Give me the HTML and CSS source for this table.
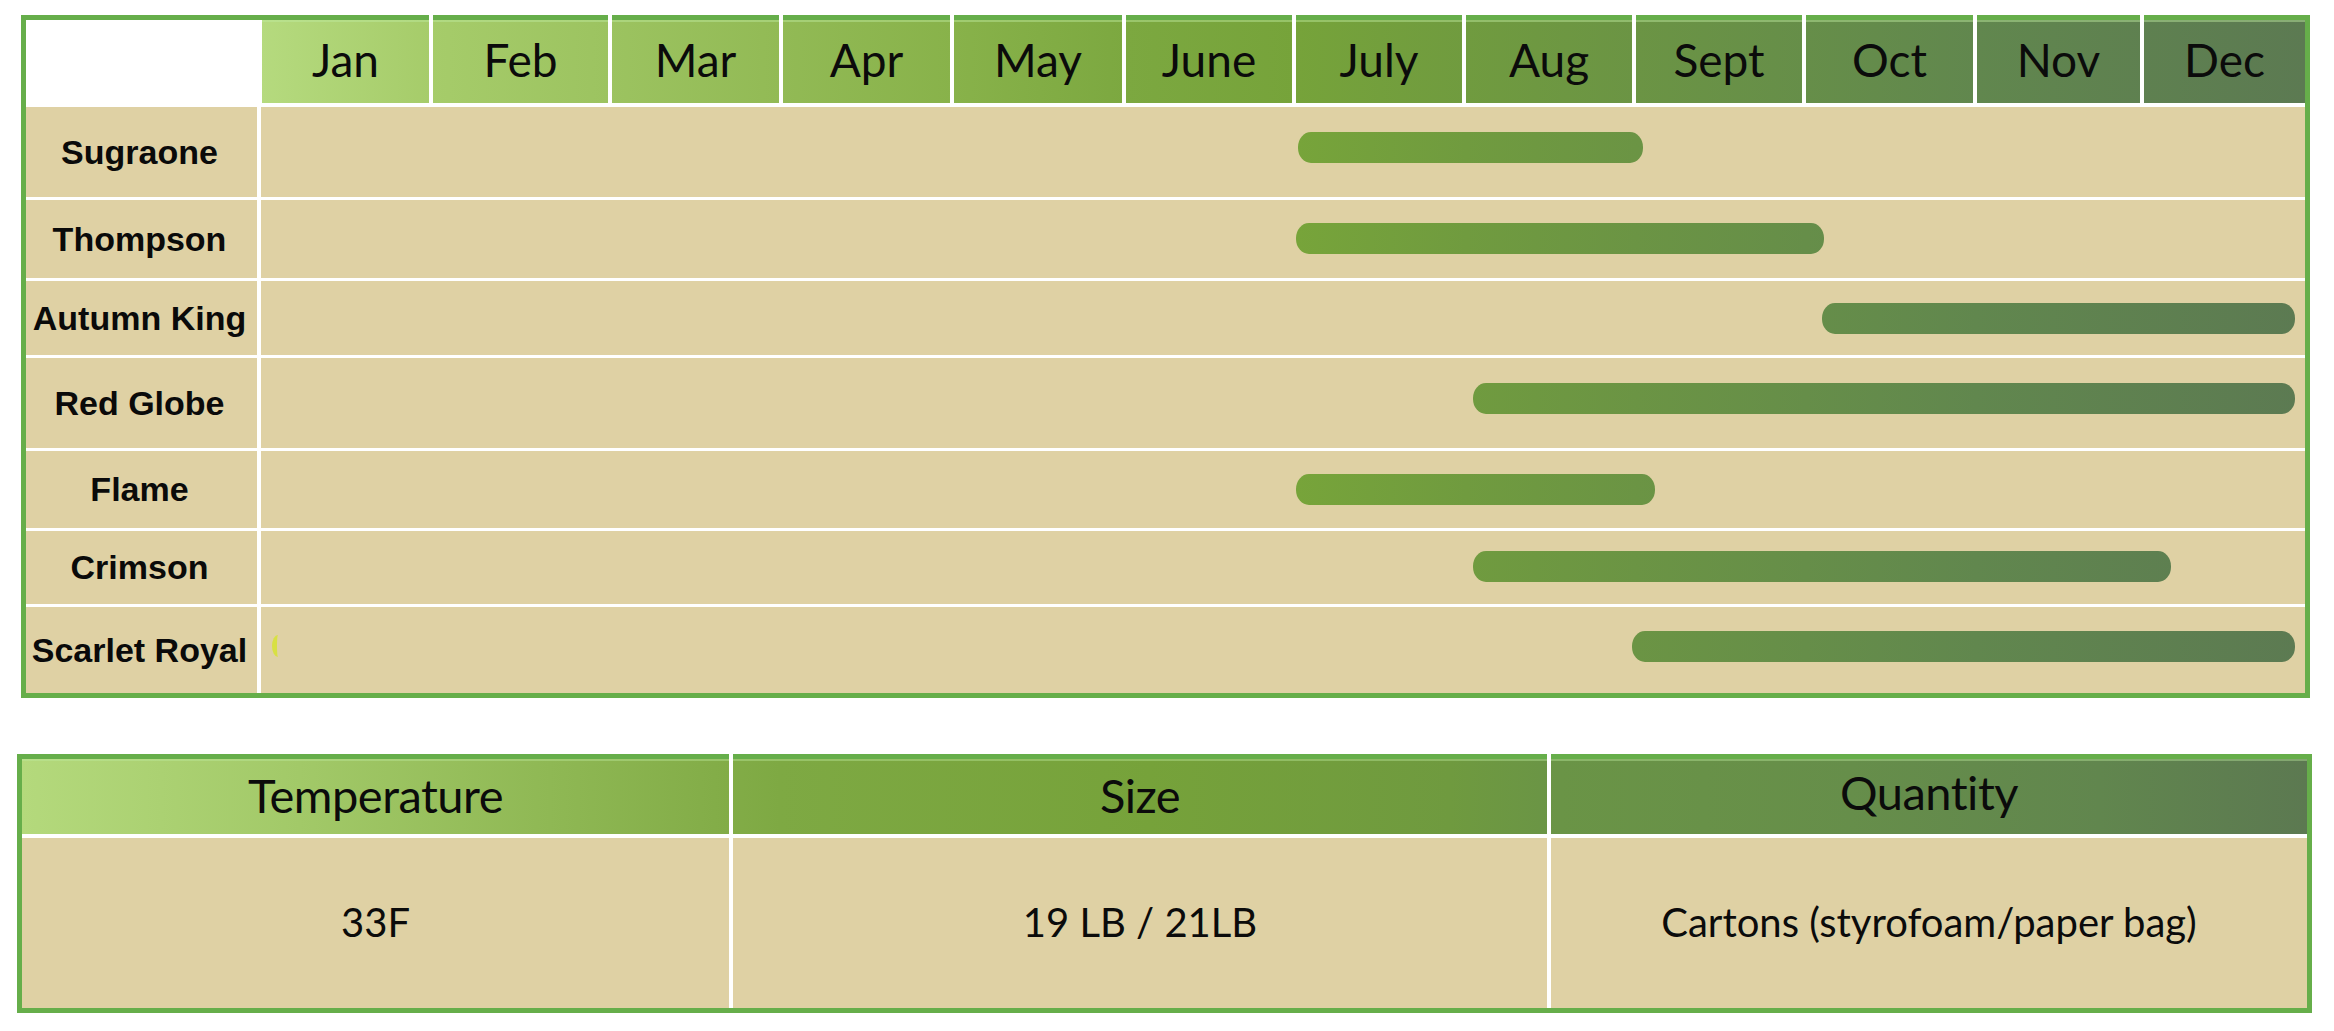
FILE: index.html
```html
<!DOCTYPE html>
<html lang="en">
<head>
<meta charset="utf-8">
<title>Grape Season Schedule</title>
<link rel="stylesheet" href="styles.css">
</head>
<body>
<main class="page">
  <section class="schedule">
    <div class="head">
      <div class="corner"></div>
      <div class="months">
        <div class="month">Jan</div>
        <div class="month">Feb</div>
        <div class="month">Mar</div>
        <div class="month">Apr</div>
        <div class="month">May</div>
        <div class="month">June</div>
        <div class="month">July</div>
        <div class="month">Aug</div>
        <div class="month">Sept</div>
        <div class="month">Oct</div>
        <div class="month">Nov</div>
        <div class="month">Dec</div>
      </div>
    </div>
    <div class="row row-sugraone">
      <div class="label">Sugraone</div>
      <div class="track"><span class="bar" style="margin-left:1037px;width:345px"></span></div>
    </div>
    <div class="row row-thompson">
      <div class="label">Thompson</div>
      <div class="track"><span class="bar" style="margin-left:1035px;width:528px"></span></div>
    </div>
    <div class="row row-autumn">
      <div class="label">Autumn King</div>
      <div class="track"><span class="bar" style="margin-left:1561px;width:473px"></span></div>
    </div>
    <div class="row row-redglobe">
      <div class="label">Red Globe</div>
      <div class="track"><span class="bar" style="margin-left:1212px;width:822px"></span></div>
    </div>
    <div class="row row-flame">
      <div class="label">Flame</div>
      <div class="track"><span class="bar" style="margin-left:1035px;width:359px"></span></div>
    </div>
    <div class="row row-crimson">
      <div class="label">Crimson</div>
      <div class="track"><span class="bar" style="margin-left:1212px;width:698px"></span></div>
    </div>
    <div class="row row-scarlet">
      <div class="label">Scarlet Royal</div>
      <div class="track"><span class="tick"></span><span class="bar" style="margin-left:1371px;width:663px"></span></div>
    </div>
  </section>

  <section class="specs">
    <div class="spec-head">Temperature</div>
    <div class="spec-head">Size</div>
    <div class="spec-head spec-head-q">Quantity</div>
    <div class="spec-val">33F</div>
    <div class="spec-val">19 LB / 21LB</div>
    <div class="spec-val">Cartons (styrofoam/paper bag)</div>
  </section>
</main>
</body>
</html>
```

FILE: styles.css
```css
html, body {
  margin: 0;
  padding: 0;
  background: #ffffff;
}

body {
  font-family: Lato, "Open Sans", "Liberation Sans", sans-serif;
  font-variant-ligatures: none;
  font-feature-settings: "liga" 0, "clig" 0;
  color: #0b0b0b;
}

.page {
  padding-top: 15px;
}

/* ---------- schedule table ---------- */
.schedule {
  margin-left: 21px;
  width: 2289px;
  box-sizing: border-box;
  border: 5px solid #66ae4a;
  border-top: 0;
  background: #ffffff;
  display: flex;
  flex-direction: column;
}

.head {
  display: flex;
  height: 88px;
}

.corner {
  width: 236px;
  flex: none;
  background: #ffffff;
  border-top: 5px solid #66ae4a;
}

.months {
  flex: 1;
  display: grid;
  grid-template-columns: 167px 175px 167px 167px 168px 166px 166px 166px 166px 167px 163px 161px;
  column-gap: 4px;
}

.month {
  border-top: 5px solid #66ae4a;
  box-shadow: inset 0 2px 0 rgba(190, 235, 160, 0.45);
  background-image: linear-gradient(to right,
    #b5da7e 262px, #a6cc6a 430px, #9cc360 610px, #92ba55 780px,
    #88b24a 954px, #7ca840 1126px, #76a33a 1296px, #709b3f 1466px,
    #6b9444 1636px, #668e49 1806px, #61874e 1977px, #5c7a52 2305px);
  background-attachment: fixed;
  display: flex;
  align-items: center;
  justify-content: center;
  font-size: 46px;
  padding-bottom: 4px;
  box-sizing: border-box;
}

.row {
  display: flex;
  gap: 4px;
  margin-top: 3px;
}

.row-sugraone { margin-top: 4px; height: 90px; }
.row-thompson { height: 78px; }
.row-autumn { height: 74px; }
.row-redglobe { height: 90px; }
.row-flame { height: 77px; }
.row-crimson { height: 73px; }
.row-scarlet { height: 86px; }

.label {
  width: 231px;
  flex: none;
  background: #dfd1a4;
  display: flex;
  align-items: center;
  justify-content: center;
  font-family: "Liberation Sans", Arial, sans-serif;
  font-weight: bold;
  font-size: 34px;
  color: #0a0a0a;
  padding-right: 4px;
  box-sizing: border-box;
  white-space: nowrap;
}

.track {
  flex: 1;
  position: relative;
  background: #dfd1a4;
  display: flex;
  align-items: flex-start;
}

.bar {
  display: block;
  flex: none;
  height: 31px;
  margin-top: 23px;
  border-radius: 13px / 15px;
  background-image: linear-gradient(to right,
    #b5da7e 262px, #a6cc6a 430px, #9cc360 610px, #92ba55 780px,
    #88b24a 954px, #7ca840 1126px, #77a43a 1296px, #709b3f 1466px,
    #6b9444 1636px, #668e49 1806px, #61874e 1977px, #5c7a52 2305px);
  background-attachment: fixed;
}

.row-sugraone .bar { margin-top: 25px; }
.row-thompson .bar { margin-top: 23px; }
.row-autumn .bar { margin-top: 22px; }
.row-redglobe .bar { margin-top: 25px; }
.row-flame .bar { margin-top: 23px; }
.row-crimson .bar { margin-top: 20px; }
.row-scarlet .bar { margin-top: 24px; }

.tick {
  position: absolute;
  left: 11px;
  top: 28px;
  width: 12px;
  height: 22px;
  box-sizing: border-box;
  border-radius: 50%;
  border-left: 5px solid #d8e043;
}

/* ---------- specs table ---------- */
.specs {
  margin: 56px 0 0 17px;
  width: 2295px;
  box-sizing: border-box;
  border: 5px solid #66ae4a;
  border-top: 0;
  background: #ffffff;
  display: grid;
  grid-template-columns: 707px 814px 756px;
  grid-template-rows: 80px 170px;
  column-gap: 4px;
  row-gap: 4px;
}

.spec-head {
  border-top: 5px solid #66ae4a;
  box-shadow: inset 0 2px 0 rgba(190, 235, 160, 0.4);
  background-image: linear-gradient(to right,
    #b4d97c 22px, #a2c968 300px, #8fb854 550px, #82ac47 729px,
    #7ea943 780px, #76a23a 1150px, #6f9a3f 1450px, #6a9446 1560px,
    #668e4a 1850px, #61864e 2100px, #5c7951 2307px);
  background-attachment: fixed;
  display: flex;
  align-items: center;
  justify-content: center;
  font-size: 47px;
  letter-spacing: -0.5px;
  box-sizing: border-box;
  padding-bottom: 4px;
}

.spec-head-q {
  padding-bottom: 10px;
}

.spec-val {
  background: #dfd1a4;
  display: flex;
  align-items: center;
  justify-content: center;
  font-size: 40px;
  padding-bottom: 2px;
  box-sizing: border-box;
}
```
